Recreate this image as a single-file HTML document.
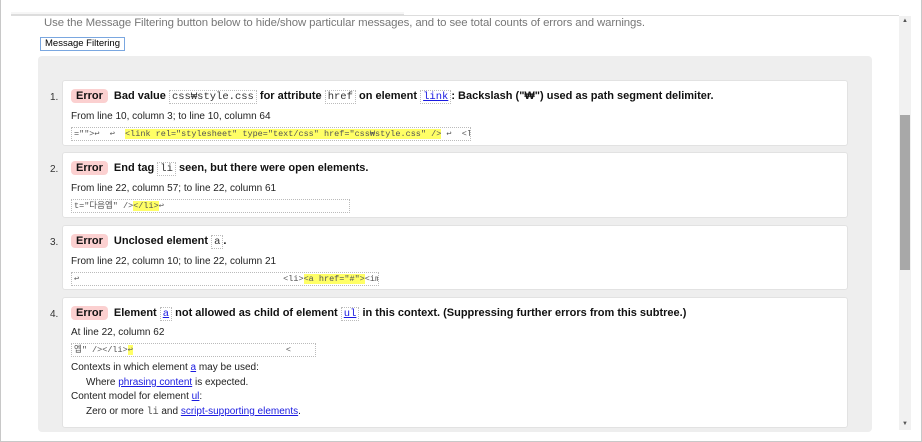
<!DOCTYPE html>
<html><head><meta charset="utf-8"><style>
*{margin:0;padding:0;box-sizing:border-box}
body{width:922px;height:442px;overflow:hidden;background:#fff;font-family:"Liberation Sans","Noto Sans CJK KR",sans-serif;position:relative;color:#222}
.frame{position:absolute;left:0;top:0;width:922px;height:442px;border:1px solid #c8c8c8;border-top:none}
.topline{position:absolute;left:11px;top:12px;width:393px;height:3px;border-bottom:1px solid #ddd;background:#f6f6f6}
.topline2{position:absolute;left:11px;top:15px;width:888px;height:1px;background:#ddd}
.intro{position:absolute;left:44px;top:17px;font-size:11.4px;color:#777;letter-spacing:-0.1px}
.btn{position:absolute;left:40px;top:37px;height:14px;padding:0 4px;border:1px solid #7aa7e0;font-size:9.5px;line-height:12px;background:#fff;color:#000}
.gray{position:absolute;left:38px;top:56px;width:834px;height:376px;background:#eee;border-radius:4px}
.card{position:absolute;left:62px;width:786px;background:#fff;border:1px solid #e2e2e2;border-radius:3px}
.num{position:absolute;left:50px;font-size:10px;color:#333}
.h{position:absolute;left:8px;top:8px;font-size:11px;font-weight:bold;white-space:nowrap;color:#111}
.err{display:inline-block;background:#fbd0d0;color:#111;border-radius:4px;padding:1px 5px;margin-right:6px}
.c{font-family:"Liberation Mono",monospace;font-weight:normal;border:1px dotted #bbb;padding:0 2px;font-size:10.5px;color:#333}
a{color:#1a1ae0}
.loc{position:absolute;left:8px;font-size:10px;color:#222}
.ext{position:absolute;left:8px;height:14px;border:1px dotted #bbb;font-family:"Liberation Mono","Noto Sans CJK KR",monospace;font-size:8.5px;line-height:12px;color:#555;white-space:pre;overflow:hidden;padding-left:2px}
.hl{background:#ff6;color:#555}
.t{position:absolute;font-size:10px;color:#222;white-space:nowrap}
.sb{position:absolute;left:899px;top:16px;width:12px;height:414px;background:#f1f1f1}
.th{position:absolute;left:900px;top:115px;width:10px;height:155px;background:#a8a8a8}
</style></head><body>
<div class="frame"></div>
<div class="topline"></div><div class="topline2"></div>
<div class="intro">Use the Message Filtering button below to hide/show particular messages, and to see total counts of errors and warnings.</div>
<div class="btn">Message Filtering</div>
<div class="gray"></div>
<div class="sb"></div><div class="th"></div>
<div style="position:absolute;left:902px;top:18px;font-size:6px;color:#555">▲</div>
<div style="position:absolute;left:902px;top:421px;font-size:6px;color:#555">▼</div>

<div class="num" style="top:92px">1.</div>
<div class="card" style="top:80px;height:66px">
<div class="h"><span class="err">Error</span>Bad value <span class="c">css₩style.css</span> for attribute <span class="c">href</span> on element <span class="c"><a href="#">link</a></span>: Backslash ("₩") used as path segment delimiter.</div>
<div class="loc" style="top:30px">From line 10, column 3; to line 10, column 64</div>
<div class="ext" style="top:46px;width:400px">="">↩  ↩  <span class="hl">&lt;link rel="stylesheet" type="text/css" href="css₩style.css" /&gt;</span> ↩  &lt;l</div>
</div>

<div class="num" style="top:164px">2.</div>
<div class="card" style="top:152px;height:66px">
<div class="h"><span class="err">Error</span>End tag <span class="c">li</span> seen, but there were open elements.</div>
<div class="loc" style="top:30px">From line 22, column 57; to line 22, column 61</div>
<div class="ext" style="top:46px;width:279px">t="다음엡" /&gt;<span class="hl">&lt;/li&gt;</span>↩</div>
</div>

<div class="num" style="top:237px">3.</div>
<div class="card" style="top:225px;height:65px">
<div class="h"><span class="err">Error</span>Unclosed element <span class="c">a</span>.</div>
<div class="loc" style="top:30px">From line 22, column 10; to line 22, column 21</div>
<div class="ext" style="top:46px;width:308px">↩                                        &lt;li&gt;<span class="hl">&lt;a href="#"&gt;</span>&lt;img s</div>
</div>

<div class="num" style="top:309px">4.</div>
<div class="card" style="top:297px;height:131px">
<div class="h"><span class="err">Error</span>Element <span class="c"><a href="#">a</a></span> not allowed as child of element <span class="c"><a href="#">ul</a></span> in this context. (Suppressing further errors from this subtree.)</div>
<div class="loc" style="top:29px">At line 22, column 62</div>
<div class="ext" style="top:45px;width:245px">엡" /&gt;&lt;/li&gt;<span class="hl">↩</span>                              &lt;</div>
<div class="t" style="left:8px;top:64px">Contexts in which element <a href="#">a</a> may be used:</div>
<div class="t" style="left:23px;top:79px">Where <a href="#">phrasing content</a> is expected.</div>
<div class="t" style="left:8px;top:93px">Content model for element <a href="#">ul</a>:</div>
<div class="t" style="left:23px;top:108px">Zero or more <span style="font-family:'Liberation Mono',monospace;color:#555">li</span> and <a href="#">script-supporting elements</a>.</div>
</div>
</body></html>
